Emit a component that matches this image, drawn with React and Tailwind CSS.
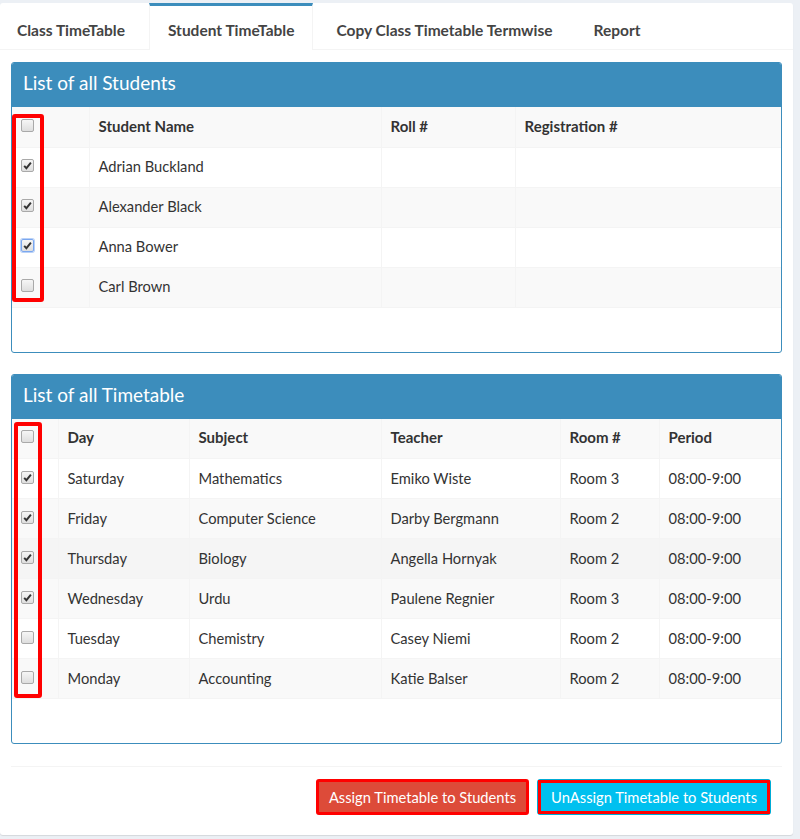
import React from 'react';

const students = ['Adrian Buckland', 'Alexander Black', 'Anna Bower', 'Carl Brown'];
const studentChecks = [true, true, true, false];

const timetable = [
  ['Saturday', 'Mathematics', 'Emiko Wiste', 'Room 3', '08:00-9:00', true],
  ['Friday', 'Computer Science', 'Darby Bergmann', 'Room 2', '08:00-9:00', true],
  ['Thursday', 'Biology', 'Angella Hornyak', 'Room 2', '08:00-9:00', true],
  ['Wednesday', 'Urdu', 'Paulene Regnier', 'Room 3', '08:00-9:00', true],
  ['Tuesday', 'Chemistry', 'Casey Niemi', 'Room 2', '08:00-9:00', false],
  ['Monday', 'Accounting', 'Katie Balser', 'Room 2', '08:00-9:00', false],
];

const Check = ({ checked, focus }) => (
  <span
    className={`flex items-center justify-center w-[13px] h-[13px] rounded-[2px] border ${
      focus ? 'border-[#7aa7f0] shadow-[0_0_0_1px_#b9d1f7]' : 'border-[#a9a9a9]'
    } bg-gradient-to-b from-[#f6f6f6] to-[#dedede]`}
  >
    {checked && (
      <svg width="9" height="9" viewBox="0 0 9 9">
        <path d="M1.2 4.8 L3.4 7.2 L7.9 1.6" fill="none" stroke="#333" strokeWidth="1.9" />
      </svg>
    )}
  </span>
);

const tabs = [
  ['Class TimeTable', 'pl-[17px] pr-[24px]'],
  ['Student TimeTable', 'px-[18px]'],
  ['Copy Class Timetable Termwise', 'pl-[23px] pr-[20px]'],
  ['Report', 'pl-[21px] pr-[18px]'],
];

const Box = ({ title, children }) => (
  <div className="border border-[#3c8dbc] rounded-[3px] overflow-hidden">
    <div className="bg-[#3c8dbc] h-[44px] flex items-center pl-[11px] pb-[3px] text-white text-[19px]">{title}</div>
    <div className="pb-[44px]">{children}</div>
  </div>
);

const rowBg = (i, hover) => (hover ? 'bg-[#f5f5f5]' : i % 2 === 0 ? 'bg-[#f9f9f9]' : 'bg-white');

export default function App() {
  return (
    <div
      className="min-h-[839px] bg-[#ecf0f5] pt-[3px] pr-[7px] text-[#333]"
      style={{ fontFamily: "'Source Sans Pro', Lato, 'Liberation Sans', sans-serif" }}
    >
      <div className="bg-white rounded-[3px] shadow-[0_1px_1px_rgba(0,0,0,0.1)] pb-[20px]">
        <ul className="flex border-b border-[#f4f4f4] h-[47px]">
          {tabs.map(([t, pad], i) => (
            <li
              key={t}
              className={`flex items-center text-[15.5px] font-bold text-[#444] border-t-[3px] ${pad} ${
                i === 1 ? 'border-[#3c8dbc] border-x border-x-[#f4f4f4] bg-white -mb-px' : 'border-t-transparent'
              }`}
            >
              <span className="pt-[6px]">{t}</span>
            </li>
          ))}
        </ul>

        <div className="px-[11px] pt-[12px]">
          <Box title="List of all Students">
            <div className="relative">
              <table className="w-full table-fixed border-collapse text-[14.7px]">
                <colgroup>
                  <col className="w-[77px]" />
                  <col className="w-[292px]" />
                  <col className="w-[134px]" />
                  <col />
                </colgroup>
                <tbody>
                  <tr className="bg-[#f9f9f9] h-[40px] border-b border-[#f4f4f4]">
                    <td className="pl-[9px] pb-[3px]"><Check /></td>
                    <th className="text-left font-bold text-[15px] border-l border-[#f4f4f4] pl-[9px] pb-[2px]">Student Name</th>
                    <th className="text-left font-bold text-[15px] border-l border-[#f4f4f4] pl-[9px] pb-[2px]">Roll #</th>
                    <th className="text-left font-bold text-[15px] border-l border-[#f4f4f4] pl-[9px] pb-[2px]">Registration #</th>
                  </tr>
                  {students.map((s, i) => (
                    <tr key={s} className={`${rowBg(i + 1)} h-[40px] border-b border-[#f4f4f4]`}>
                      <td className="pl-[9px] pb-[3px]"><Check checked={studentChecks[i]} focus={i === 2} /></td>
                      <td className="border-l border-[#f4f4f4] pl-[9px] pb-[1px]">{s}</td>
                      <td className="border-l border-[#f4f4f4]"></td>
                      <td className="border-l border-[#f4f4f4]"></td>
                    </tr>
                  ))}
                </tbody>
              </table>
              <div className="absolute left-0 top-[7px] w-[32px] h-[188px] border-[4px] border-[#ff0000] rounded-[3px]" />
            </div>
          </Box>

          <div className="h-[21px]" />

          <Box title="List of all Timetable">
            <div className="relative">
              <table className="w-full table-fixed border-collapse text-[14.7px]">
                <colgroup>
                  <col className="w-[46px]" />
                  <col className="w-[131px]" />
                  <col className="w-[192px]" />
                  <col className="w-[179px]" />
                  <col className="w-[99px]" />
                  <col />
                </colgroup>
                <tbody>
                  <tr className="bg-[#f9f9f9] h-[40px] border-b border-[#f4f4f4]">
                    <td className="pl-[9px] pb-[3px]"><Check /></td>
                    {['Day', 'Subject', 'Teacher', 'Room #', 'Period'].map((h) => (
                      <th key={h} className="text-left font-bold text-[15px] border-l border-[#f4f4f4] pl-[9px] pb-[2px]">{h}</th>
                    ))}
                  </tr>
                  {timetable.map((r, i) => (
                    <tr key={r[0]} className={`${rowBg(i + 1, i === 2)} h-[40px] border-b border-[#f4f4f4]`}>
                      <td className="pl-[9px] pb-[3px]"><Check checked={r[5]} /></td>
                      {r.slice(0, 5).map((c, j) => (
                        <td key={j} className="border-l border-[#f4f4f4] pl-[9px] pb-[1px]">{c}</td>
                      ))}
                    </tr>
                  ))}
                </tbody>
              </table>
              <div className="absolute left-[2px] top-[3px] w-[28px] h-[276px] border-[4px] border-[#ff0000] rounded-[3px]" />
            </div>
          </Box>

          <div className="mt-[22px] border-t border-[#f4f4f4] pt-[12px] pr-[11px] flex justify-end gap-[8px]">
            <div className="border-[3px] border-[#ff0000] rounded-[3px]">
              <button className="bg-[#dd4b39] text-white text-[14.7px] h-[30px] px-[10px] block">
                Assign Timetable to Students
              </button>
            </div>
            <div className="border border-[#00acd6] rounded-[3px] p-[2px] bg-[#00c0ef]">
              <div className="border-[3px] border-[#ff0000] -m-[2px]">
                <button className="bg-[#00c0ef] text-white text-[14.7px] h-[28px] px-[10px] block">
                  UnAssign Timetable to Students
                </button>
              </div>
            </div>
          </div>
        </div>
      </div>
    </div>
  );
}
